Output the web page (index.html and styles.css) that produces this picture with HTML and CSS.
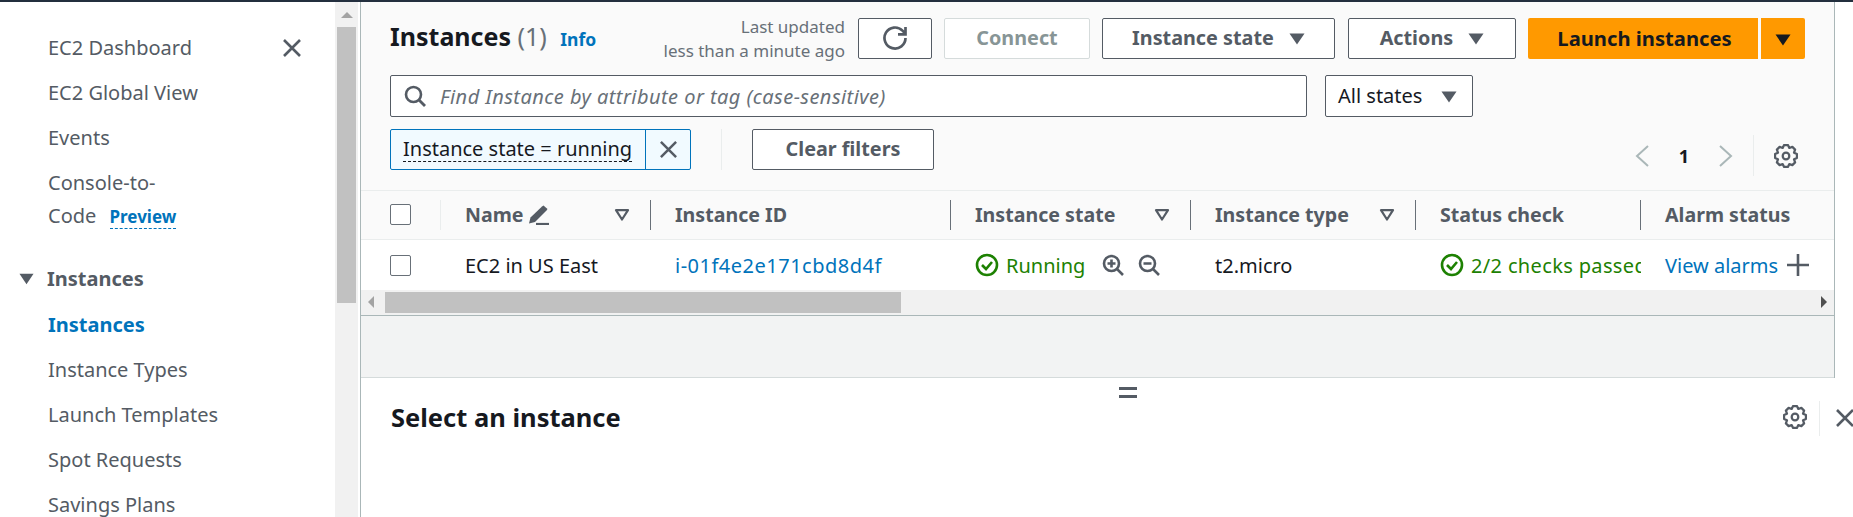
FILE: index.html
```html
<!DOCTYPE html>
<html lang="en">
<head>
    <meta charset="UTF-8">
    <meta name="viewport" content="width=device-width, initial-scale=1.0">
    <title>Instances | EC2</title>
    <link rel="stylesheet" href="styles.css">
</head>
<body>
    <svg class="defs" xmlns="http://www.w3.org/2000/svg">
        <symbol id="i-close" viewBox="0 0 20 20"><path d="M2 2l16 16M18 2L2 18" fill="none" stroke="currentColor" stroke-width="2.6"/></symbol>
        <symbol id="i-gear" viewBox="0 0 16 16"><path d="M15.29 6.72V9.28L13.36 10.22 14.06 12.24 12.24 14.06 10.22 13.36 9.28 15.29H6.72L5.78 13.36 3.76 14.06 1.94 12.24 2.64 10.22 .71 9.28V6.72L2.64 5.78 1.94 3.76 3.76 1.94 5.78 2.64 6.72 .71H9.28L10.22 2.64 12.24 1.94 14.06 3.76 13.36 5.78Z" fill="none" stroke="currentColor" stroke-width="1.5" stroke-linejoin="round"/><circle cx="8" cy="8" r="2.2" fill="none" stroke="currentColor" stroke-width="1.5"/></symbol>
        <symbol id="i-check" viewBox="0 0 24 24"><circle cx="12" cy="12" r="10" fill="none" stroke="currentColor" stroke-width="2.6"/><path d="M7 12l4 4 6-7" fill="none" stroke="currentColor" stroke-width="2.6"/></symbol>
        <symbol id="i-sort" viewBox="0 0 16 12"><path d="M2 1.2h12L8 10.5z" fill="none" stroke="currentColor" stroke-width="2.2" stroke-linejoin="round"/></symbol>
        <symbol id="i-caret" viewBox="0 0 16 12"><path d="M.5 .5h15L8 11.5z" fill="currentColor"/></symbol>
    </svg>

    <div class="app">
        <nav class="sidebar">
            <ul class="nav-list">
                <li class="nav-item nav-first">
                    <span>EC2 Dashboard</span>
                    <svg class="nav-close"><use href="#i-close"/></svg>
                </li>
                <li class="nav-item">EC2 Global View</li>
                <li class="nav-item">Events</li>
                <li class="nav-wrap">Console-to-<br>Code <a class="preview">Preview</a></li>
                <li class="nav-section">
                    <svg class="nav-caret"><use href="#i-caret"/></svg>
                    Instances
                </li>
                <li class="nav-item nav-active">Instances</li>
                <li class="nav-item">Instance Types</li>
                <li class="nav-item">Launch Templates</li>
                <li class="nav-item">Spot Requests</li>
                <li class="nav-item">Savings Plans</li>
            </ul>
        </nav>
        <div class="vscroll">
            <svg class="vscroll-up" viewBox="0 0 12 8"><path d="M0 7L6 1l6 6z"/></svg>
            <div class="vscroll-thumb"></div>
        </div>

        <main class="main">
            <section class="top">
                <div class="toolbar">
                    <div class="row row-actions">
                        <h1 class="title">Instances <span class="count">(1)</span> <a class="info">Info</a></h1>
                        <p class="updated">Last updated<br>less than a minute ago</p>
                        <button class="btn btn-refresh">
                            <svg class="refresh" viewBox="0 0 16 16"><path d="M15 8a7 7 0 1 1-2-4.9L15 5.2M15 .6v5h-5" fill="none" stroke="currentColor" stroke-width="1.8"/></svg>
                        </button>
                        <button class="btn btn-connect" disabled>Connect</button>
                        <button class="btn btn-state">Instance state <svg class="caret"><use href="#i-caret"/></svg></button>
                        <button class="btn btn-actions">Actions <svg class="caret"><use href="#i-caret"/></svg></button>
                        <div class="launch">
                            <button class="btn-launch">Launch instances</button>
                            <button class="btn-launch btn-launch-more"><svg class="caret"><use href="#i-caret"/></svg></button>
                        </div>
                    </div>
                    <div class="row row-search">
                        <div class="search">
                            <svg class="search-icon" viewBox="0 0 22 22"><circle cx="9.5" cy="9.5" r="7.5" fill="none" stroke="currentColor" stroke-width="2.6"/><path d="M15 15l6 6" stroke="currentColor" stroke-width="2.8"/></svg>
                            <span class="placeholder">Find Instance by attribute or tag (case-sensitive)</span>
                        </div>
                        <button class="select">All states <svg class="caret"><use href="#i-caret"/></svg></button>
                    </div>
                    <div class="row row-filter">
                        <div class="chip">
                            <span class="chip-text"><span class="chip-label">Instance state = running</span></span>
                            <span class="chip-x"><svg class="chip-close"><use href="#i-close"/></svg></span>
                        </div>
                        <div class="filter-sep"></div>
                        <button class="btn btn-clear">Clear filters</button>
                        <div class="pager">
                            <svg class="chev" viewBox="0 0 14 22"><path d="M13 1L2 11l11 10" fill="none" stroke="currentColor" stroke-width="2"/></svg>
                            <span class="page-num">1</span>
                            <svg class="chev" viewBox="0 0 14 22"><path d="M1 1l11 10L1 21" fill="none" stroke="currentColor" stroke-width="2"/></svg>
                            <span class="pager-sep"></span>
                            <svg class="gear"><use href="#i-gear"/></svg>
                        </div>
                    </div>
                </div>

                <div class="cols thead">
                    <div class="th th-check"><span class="checkbox"></span></div>
                    <div class="th">
                        Name
                        <svg class="pencil" viewBox="0 0 22 20"><path d="M2.500 12.500L14 1.500l1.500-1 4 3.500-1 1.500L7 17 1 18.500z" fill="currentColor"/><path d="M8 19h13" stroke="currentColor" stroke-width="2.200"/></svg>
                        <svg class="sort"><use href="#i-sort"/></svg>
                    </div>
                    <div class="th">Instance ID</div>
                    <div class="th">Instance state <svg class="sort"><use href="#i-sort"/></svg></div>
                    <div class="th">Instance type <svg class="sort"><use href="#i-sort"/></svg></div>
                    <div class="th">Status check</div>
                    <div class="th th-last">Alarm status</div>
                </div>
                <div class="cols tbody">
                    <div class="td td-check"><span class="checkbox"></span></div>
                    <div class="td">EC2 in US East</div>
                    <div class="td"><a class="link link-id">i-01f4e2e171cbd8d4f</a></div>
                    <div class="td td-ok">
                        <svg class="ok-icon"><use href="#i-check"/></svg>
                        Running
                        <svg class="zoom-icon zoom-first" viewBox="0 0 22 22"><circle cx="9.500" cy="9.500" r="7.500" fill="none" stroke="currentColor" stroke-width="2.600"/><path d="M15 15l6 6M5.500 9.500h8M9.500 5.500v8" stroke="currentColor" stroke-width="2.600"/></svg>
                        <svg class="zoom-icon" viewBox="0 0 22 22"><circle cx="9.500" cy="9.500" r="7.500" fill="none" stroke="currentColor" stroke-width="2.600"/><path d="M15 15l6 6M5.500 9.500h8" stroke="currentColor" stroke-width="2.600"/></svg>
                    </div>
                    <div class="td">t2.micro</div>
                    <div class="td td-ok td-clip">
                        <svg class="ok-icon"><use href="#i-check"/></svg>
                        <span class="status-text">2/2 checks passed</span>
                    </div>
                    <div class="td td-alarm">
                        <a class="link">View alarms</a>
                        <svg class="plus" viewBox="0 0 22 22"><path d="M0 11h22M11 0v22" stroke="currentColor" stroke-width="2.600"/></svg>
                    </div>
                </div>
                <div class="hscroll">
                    <svg class="hscroll-arrow" viewBox="0 0 8 12"><path d="M7 0L1 6l6 6z"/></svg>
                    <div class="hscroll-thumb"></div>
                    <svg class="hscroll-arrow hscroll-right" viewBox="0 0 8 12"><path d="M1 0l6 6-6 6z"/></svg>
                </div>
                <div class="spacer"></div>
            </section>

            <section class="panel">
                <div class="handle"></div>
                <div class="panel-head">
                    <h2 class="panel-title">Select an instance</h2>
                    <svg class="gear panel-gear"><use href="#i-gear"/></svg>
                    <span class="panel-sep"></span>
                    <svg class="panel-close"><use href="#i-close"/></svg>
                </div>
            </section>
        </main>
    </div>
</body>
</html>
```

FILE: styles.css
```css
* {
    box-sizing: border-box;
}

html, body {
    height: 100%;
    margin: 0;
    overflow: hidden;
}

body {
    background-color: #fff;
    border-top: 2px solid #232f3e;
    color: #16191f;
    font-family: "Noto Sans", Roboto, sans-serif;
    font-size: 20px;
}

h1, h2, p, ul {
    margin: 0;
    padding: 0;
}

button {
    font-family: inherit;
}

.defs {
    display: none;
}

.app {
    display: flex;
    height: 515px;
}

/* sidebar */
.sidebar {
    width: 335px;
    flex-shrink: 0;
    overflow: hidden;
    padding-top: 23px;
    color: #545b64;
}

.nav-list {
    list-style: none;
}

.nav-item {
    height: 45px;
    line-height: 45px;
    padding-left: 48px;
}

.nav-first {
    display: flex;
    align-items: center;
    justify-content: space-between;
    padding-right: 33px;
}

.nav-close {
    width: 20px;
    height: 20px;
}

.nav-wrap {
    line-height: 33px;
    padding: 6px 0 0 48px;
    margin-bottom: 23px;
}

.preview {
    margin-left: 8px;
    color: #0073bb;
    font-size: 17px;
    font-weight: 700;
    border-bottom: 1px dashed #0073bb;
}

.nav-section {
    display: flex;
    align-items: center;
    height: 45px;
    margin-bottom: 1px;
    padding-left: 19px;
    font-weight: 700;
}

.nav-caret {
    width: 15px;
    height: 12px;
    margin-right: 13px;
}

.nav-active {
    color: #0073bb;
    font-weight: 700;
}

/* page scrollbar */
.vscroll {
    width: 25px;
    flex-shrink: 0;
    padding: 0 2px;
    background-color: #f1f1f1;
    border-right: 2px solid #fff;
}

.vscroll-up {
    display: block;
    width: 12px;
    height: 8px;
    margin: 9px auto 8px;
    fill: #a3a3a3;
}

.vscroll-thumb {
    height: 276px;
    background-color: #c1c1c1;
}

/* main */
.main {
    flex: 1;
    min-width: 0;
    border-left: 1px solid #aab7b8;
}

.top {
    width: 1474px;
    border-right: 1px solid #aab7b8;
}

.toolbar {
    height: 189px;
    padding: 16px 29px 0;
    background-color: #fafafa;
    border-bottom: 1px solid #eaeded;
}

.row {
    display: flex;
}

.row-actions {
    height: 41px;
    align-items: center;
}

.row-search {
    margin-top: 16px;
}

.row-filter {
    height: 41px;
    margin-top: 12px;
}

.title {
    flex: 1;
    font-size: 25px;
    font-weight: 700;
    margin-top: -6px;
}

.count {
    color: #687078;
    font-weight: 400;
}

.info {
    margin-left: 7px;
    color: #0073bb;
    font-size: 17.5px;
    font-weight: 700;
}

.updated {
    margin: 0 13px 0 0;
    color: #687078;
    font-size: 17px;
    line-height: 24px;
    text-align: right;
}

.btn {
    height: 41px;
    padding: 0 0 2px;
    color: #545b64;
    background-color: #fff;
    border: 1px solid #545b64;
    border-radius: 2px;
    font-size: 19.8px;
    font-weight: 700;
}

.btn-refresh {
    width: 74px;
    margin-right: 12px;
}

.refresh {
    display: block;
    width: 24px;
    height: 24px;
    margin: 0 auto;
}

.btn-connect {
    width: 146px;
    margin-right: 12px;
    color: #879596;
    border-color: #d5dbdb;
}

.btn-state {
    width: 233px;
    margin-right: 13px;
}

.btn-actions {
    width: 168px;
    margin-right: 12px;
}

.caret {
    width: 16px;
    height: 12px;
    margin-left: 10px;
}

.launch {
    display: flex;
    gap: 3px;
}

.btn-launch {
    width: 230px;
    height: 41px;
    padding: 0 0 2px 3px;
    color: #16191f;
    background-color: #ff9900;
    border: none;
    border-radius: 2px 0 0 2px;
    font-size: 20.2px;
    font-weight: 700;
}

.btn-launch-more {
    width: 44px;
    padding-left: 0;
    border-radius: 0 2px 2px 0;
}

.btn-launch-more .caret {
    margin-left: 0;
}

.search {
    display: flex;
    align-items: center;
    width: 917px;
    height: 42px;
    padding-left: 13px;
    background-color: #fff;
    border: 1px solid #545b64;
    border-radius: 2px;
}

.search-icon {
    width: 22px;
    height: 22px;
    margin-right: 14px;
    color: #545b64;
}

.placeholder {
    color: #687078;
    font-style: italic;
    letter-spacing: .45px;
}

.select {
    width: 148px;
    height: 42px;
    margin-left: 18px;
    padding: 0 0 2px 12px;
    color: #16191f;
    background-color: #fff;
    border: 1px solid #545b64;
    border-radius: 2px;
    font-size: 20px;
    text-align: left;
}

.select .caret {
    margin-left: 13px;
    color: #545b64;
}

.chip {
    display: flex;
    width: 301px;
    background-color: #f1faff;
    border: 1px solid #0073bb;
    border-radius: 2px;
}

.chip-text {
    width: 255px;
    padding: 0 0 0 12px;
    border-right: 1px solid #0073bb;
    white-space: nowrap;
    overflow: hidden;
}

.chip-label {
    display: inline-block;
    height: 32px;
    line-height: 38px;
    border-bottom: 1px dashed #16191f;
}

.chip-x {
    display: flex;
    flex: 1;
    align-items: center;
    justify-content: center;
    color: #545b64;
}

.chip-close {
    width: 19px;
    height: 19px;
}

.filter-sep {
    width: 1px;
    margin: 0 30px;
    background-color: #eaeded;
}

.btn-clear {
    width: 182px;
}

.pager {
    display: flex;
    align-items: center;
    height: 41px;
    margin: 6px 0 0 auto;
    padding-right: 7px;
}

.chev {
    width: 14px;
    height: 22px;
    color: #aab7b8;
}

.page-num {
    width: 70px;
    font-weight: 700;
    font-size: 18px;
    text-align: center;
}

.pager-sep {
    width: 1px;
    height: 41px;
    margin: 0 20px;
    background-color: #eaeded;
}

.gear {
    width: 24px;
    height: 24px;
    color: #545b64;
}

/* table */
.cols {
    display: grid;
    grid-template-columns: 80px 210px 300px 240px 225px 225px 193px;
    align-items: center;
}

.thead {
    height: 49px;
    padding-bottom: 1px;
    background-color: #fafafa;
    border-bottom: 1px solid #eaeded;
}

.th {
    display: flex;
    align-items: center;
    height: 30px;
    padding: 0 20px 0 24px;
    color: #545b64;
    font-size: 19.6px;
    font-weight: 700;
    white-space: nowrap;
    border-right: 1px solid #687078;
}

.th-check {
    padding-left: 29px;
    border-right-color: #eaeded;
}

.th-last {
    border-right: none;
}

.th .sort {
    margin-left: auto;
}

.pencil {
    width: 22px;
    height: 20px;
    margin-left: 5px;
}

.sort {
    width: 16px;
    height: 12px;
}

.checkbox {
    display: block;
    width: 21px;
    height: 21px;
    background-color: #fff;
    border: 1px solid #687078;
    border-radius: 2px;
}

.tbody {
    height: 50px;
    background-color: #fff;
}

.td {
    display: flex;
    align-items: center;
    padding-left: 24px;
    white-space: nowrap;
}

.td-check {
    padding-left: 29px;
}

.td-ok {
    color: #1d8102;
}

.td-clip {
    overflow: hidden;
}

.status-text {
    letter-spacing: .35px;
}

.ok-icon {
    width: 24px;
    height: 24px;
    margin-right: 7px;
    flex-shrink: 0;
}

.zoom-icon {
    width: 22px;
    height: 22px;
    margin-left: 14px;
    color: #545b64;
}

.zoom-first {
    margin-left: 17px;
}

.link {
    color: #0073bb;
}

.link-id {
    letter-spacing: .5px;
}

.plus {
    width: 22px;
    height: 22px;
    margin-left: 9px;
    color: #545b64;
}

.hscroll {
    display: flex;
    align-items: center;
    height: 26px;
    padding-bottom: 1px;
    background-color: #f1f1f1;
    border-bottom: 1px solid #aab7b8;
}

.hscroll-arrow {
    width: 8px;
    height: 12px;
    margin-left: 6px;
    fill: #a3a3a3;
    flex-shrink: 0;
}

.hscroll-thumb {
    width: 516px;
    height: 21px;
    margin-left: 10px;
    background-color: #c1c1c1;
}

.hscroll-right {
    margin-left: auto;
    margin-right: 6px;
    fill: #505050;
}

.spacer {
    height: 62px;
    background-color: #f2f3f3;
    border-bottom: 1px solid #d5dbdb;
}

/* split panel */
.panel {
    background-color: #fff;
}

.handle {
    width: 18px;
    height: 11px;
    margin: 9px 0 0 758px;
    border-top: 3px solid #545b64;
    border-bottom: 3px solid #545b64;
}

.panel-head {
    display: flex;
    align-items: center;
    height: 36px;
    margin-top: 2px;
    padding-left: 30px;
}

.panel-title {
    flex: 1;
    margin-top: -2px;
    font-size: 25.5px;
    font-weight: 700;
}

.panel-gear {
    margin-top: -2px;
}

.panel-sep {
    width: 1px;
    height: 35px;
    margin: 0 15px 0 12px;
    background-color: #eaeded;
}

.panel-close {
    width: 20px;
    height: 20px;
    margin-right: -2px;
    flex-shrink: 0;
    color: #545b64;
}
```
